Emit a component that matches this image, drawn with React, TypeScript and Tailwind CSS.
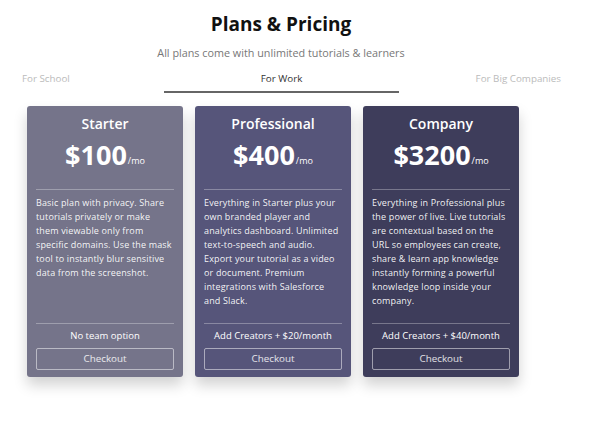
import React from 'react'

const font = { fontFamily: '"Open Sans", "DejaVu Sans", sans-serif' }

type Plan = { name: string; price: string; desc: string; extra: string; bg: string }

const plans: Plan[] = [
  {
    name: 'Starter',
    price: '$100',
    desc: 'Basic plan with privacy. Share tutorials privately or make them viewable only from specific domains. Use the mask tool to instantly blur sensitive data from the screenshot.',
    extra: 'No team option',
    bg: 'bg-[#75748a]',
  },
  {
    name: 'Professional',
    price: '$400',
    desc: 'Everything in Starter plus your own branded player and analytics dashboard. Unlimited text-to-speech and audio. Export your tutorial as a video or document. Premium integrations with Salesforce and Slack.',
    extra: 'Add Creators + $20/month',
    bg: 'bg-[#56557a]',
  },
  {
    name: 'Company',
    price: '$3200',
    desc: 'Everything in Professional plus the power of live. Live tutorials are contextual based on the URL so employees can create, share & learn app knowledge instantly forming a powerful knowledge loop inside your company.',
    extra: 'Add Creators + $40/month',
    bg: 'bg-[#3e3d5b]',
  },
]

function Card({ p }: { p: Plan }) {
  return (
    <div className={`${p.bg} w-[156px] h-[271px] rounded-[3px] flex flex-col px-[9px] pt-[9px] pb-[7px] text-white shadow-[0_8px_14px_rgba(0,0,0,0.18)]`}>
      <div className="text-center text-[14px] leading-[18px] font-semibold">{p.name}</div>
      <div className="text-center mt-[5px] h-[34px] flex items-end justify-center">
        <span className="text-[27px] leading-[34px] font-bold">{p.price}</span>
        <span className="text-[9px] leading-[9px] mb-[7px] ml-[1px]">/mo</span>
      </div>
      <div className="mt-[17px] h-px bg-white/30" />
      <div className="mt-[6px] flex-1 text-[9px] leading-[14px] tracking-[0.15px] text-white/95">{p.desc}</div>
      <div className="h-px bg-white/30" />
      <div className="mt-[5px] text-center text-[9.5px] leading-[14px]">{p.extra}</div>
      <button className="mt-[5px] h-[22px] w-full rounded-[2px] border border-white/50 text-[9.8px] text-white/85">Checkout</button>
    </div>
  )
}

export default function App() {
  return (
    <div className="w-[590px] h-[421px] bg-white overflow-hidden" style={font}>
      <h1 className="pt-[12px] text-center text-[19px] leading-[24px] font-bold text-[#111] pr-[28px]">Plans &amp; Pricing</h1>
      <p className="mt-[10px] text-center text-[10.8px] leading-[14px] text-[#777] pr-[28px]">All plans come with unlimited tutorials &amp; learners</p>
      <div className="mt-[13px] flex items-start text-[9.8px] leading-[12px]">
        <div className="ml-[22px] w-[142px] text-[#bbb]">For School</div>
        <div className="w-[235px] flex flex-col items-center text-[#333]">
          <span>For Work</span>
          <div className="mt-[6px] w-full h-[2px] bg-[#666]" />
        </div>
        <div className="ml-auto mr-[29px] text-[#bbb]">For Big Companies</div>
      </div>
      <div className="mt-[13px] ml-[27px] flex gap-[12px]">
        {plans.map(p => <Card key={p.name} p={p} />)}
      </div>
    </div>
  )
}
